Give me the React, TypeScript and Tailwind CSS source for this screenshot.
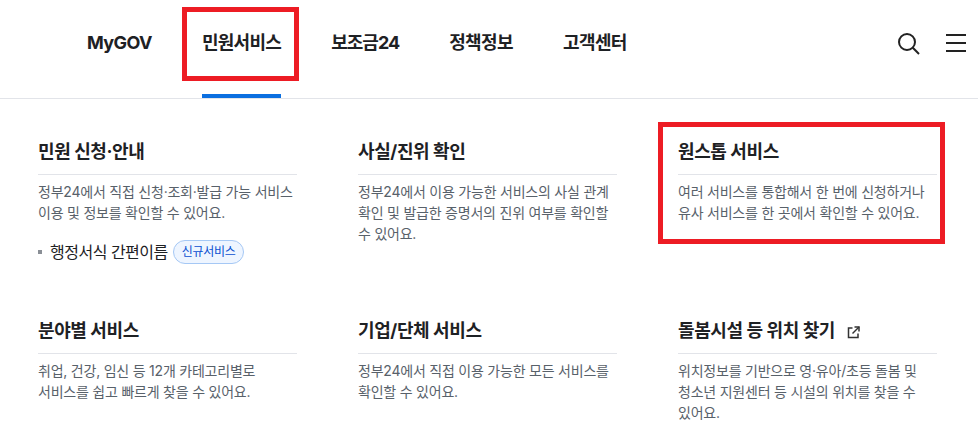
const font = { fontFamily: '"Inter", "Noto Sans CJK KR", sans-serif' };

const navItems = [
  { label: "MyGOV", tracking: "tracking-[-0.6px]" },
  { label: "민원서비스", tracking: "tracking-[-0.7px]", active: true },
  { label: "보조금24", tracking: "tracking-[-1px]" },
  { label: "정책정보", tracking: "tracking-[-0.6px]" },
  { label: "고객센터", tracking: "tracking-[-0.6px]" },
];

const ExternalIcon = () => (
  <svg width="13" height="13" viewBox="0 0 13 13" fill="none" stroke="#333" strokeWidth="1.5">
    <path d="M5.5 2H1.5V11.5H11V7.5" />
    <path d="M7.5 1H12V5.5" />
    <path d="M12 1L5.5 7.5" />
  </svg>
);

const SearchIcon = () => (
  <svg width="22" height="22" viewBox="0 0 22 22" fill="none" stroke="#222" strokeWidth="2">
    <circle cx="9" cy="9" r="8" />
    <path d="M14.8 14.8L21 21" />
  </svg>
);

const MenuIcon = () => (
  <svg width="20" height="20" viewBox="0 0 20 20" fill="#222">
    <rect x="0" y="1" width="20" height="2" />
    <rect x="0" y="9" width="20" height="2" />
    <rect x="0" y="17" width="20" height="2" />
  </svg>
);

interface CardProps {
  title: string;
  lines: string[];
  external?: boolean;
  extra?: boolean;
}

const Card = ({ title, lines, external, extra }: CardProps) => (
  <div className="w-[259px]">
    <div className="flex items-center h-[41px] border-b border-[#e2e4e9] pb-[4px]">
      <h3 className="text-[18px] font-bold text-[#1e2124] tracking-[-0.4px] leading-[28px]">{title}</h3>
      {external && (
        <span className="ml-[12px] mt-[2px]">
          <ExternalIcon />
        </span>
      )}
    </div>
    <div className="mt-[6px] text-[14px] leading-[21px] text-[#58616a] tracking-[-0.22px]">
      {lines.map((l) => (
        <p key={l} className="whitespace-nowrap">{l}</p>
      ))}
    </div>
    {extra && (
      <div className="flex items-center mt-[16px] h-[26px]">
        <span className="w-[4px] h-[4px] bg-[#8a8f96] mr-[8px]" />
        <span className="text-[16px] text-[#1e2124] tracking-[-0.5px]">행정서식 간편이름</span>
        <span className="ml-[5px] h-[24px] px-[8px] rounded-full border border-[#a5c8f5] bg-[#eef5ff] text-[12px] leading-[22px] text-[#0b50d0] tracking-[-0.3px]">
          신규서비스
        </span>
      </div>
    )}
  </div>
);

export default function App() {
  return (
    <div className="relative w-[978px] h-[443px] bg-white overflow-hidden" style={font}>
      <header className="flex items-start justify-between h-[99px] border-b border-[#e2e4e9] pl-[87px] pr-[12px]">
        <nav className="flex gap-[50px]">
          {navItems.map((item) => (
            <a
              key={item.label}
              className={`h-[98px] pt-[29px] text-[18px] font-bold leading-[28px] text-[#1e2124] ${item.tracking} ${
                item.active ? "border-b-[4px] border-[#0b6fe0]" : ""
              }`}
            >
              {item.label}
            </a>
          ))}
        </nav>
        <div className="flex items-start gap-[26px] mt-[33px]">
          <SearchIcon />
          <MenuIcon />
        </div>
      </header>

      <div className="grid grid-cols-[260px_260px_260px] gap-x-[60px] pl-[38px] pt-[35px]">
        <div className="h-[179px]">
          <Card
            title="민원 신청·안내"
            lines={["정부24에서 직접 신청·조회·발급 가능 서비스", "이용 및 정보를 확인할 수 있어요."]}
            extra
          />
        </div>
        <Card
          title="사실/진위 확인"
          lines={["정부24에서 이용 가능한 서비스의 사실 관계", "확인 및 발급한 증명서의 진위 여부를 확인할", "수 있어요."]}
        />
        <Card
          title="원스톱 서비스"
          lines={["여러 서비스를 통합해서 한 번에 신청하거나", "유사 서비스를 한 곳에서 확인할 수 있어요."]}
        />
        <Card
          title="분야별 서비스"
          lines={["취업, 건강, 임신 등 12개 카테고리별로", "서비스를 쉽고 빠르게 찾을 수 있어요."]}
        />
        <Card
          title="기업/단체 서비스"
          lines={["정부24에서 직접 이용 가능한 모든 서비스를", "확인할 수 있어요."]}
        />
        <Card
          title="돌봄시설 등 위치 찾기"
          external
          lines={["위치정보를 기반으로 영·유아/초등 돌봄 및", "청소년 지원센터 등 시설의 위치를 찾을 수", "있어요."]}
        />
      </div>

      {/* 강조 표시 */}
      <div className="absolute left-[182px] top-[7px] w-[117px] h-[74px] border-[5px] border-[#ed1c24]" />
      <div className="absolute left-[658px] top-[122px] w-[287px] h-[122px] border-[5px] border-[#ed1c24]" />
    </div>
  );
}
